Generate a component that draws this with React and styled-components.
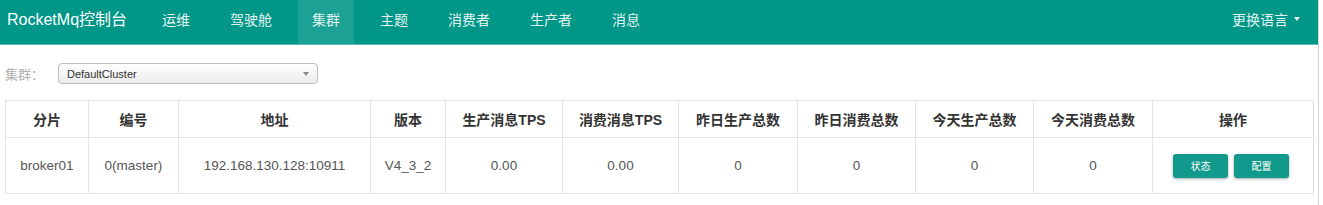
import styled, { createGlobalStyle } from 'styled-components'

const GlobalStyle = createGlobalStyle`
  body {
    margin: 0;
    background: #fff;
    font-family: "Liberation Sans", "Noto Sans CJK SC", sans-serif;
  }
`

const Page = styled.div`
  width: 1319px;
  height: 205px;
  border-right: 1px solid #d6d6d6;
  box-sizing: border-box;
`

const NavBar = styled.div`
  height: 45px;
  background: #009688;
  border-bottom: 1px solid #5fbdb3;
  box-sizing: border-box;
  display: flex;
  align-items: stretch;
  padding: 0 18px 0 7px;
`

const Brand = styled.div`
  color: #fff;
  font-size: 16px;
  display: flex;
  align-items: center;
  padding-bottom: 9px;
  margin-right: 21px;
`

const NavList = styled.div`
  display: flex;
  gap: 12px;
  flex: 1;
`

const NavItem = styled.div`
  padding: 0 14px 6px;
  display: flex;
  align-items: center;
  font-size: 14px;
  color: #e4f3f1;
  background: ${p => (p.$active ? '#1ba295' : 'transparent')};
`

const Lang = styled.div`
  display: flex;
  align-items: center;
  padding-bottom: 6px;
  color: #e4f3f1;
  font-size: 14px;
  gap: 6px;
`

const Caret = styled.span`
  width: 0;
  height: 0;
  border-left: 3px solid transparent;
  border-right: 3px solid transparent;
  border-top: 4px solid #e4f3f1;
`

const FilterRow = styled.div`
  display: flex;
  align-items: center;
  padding: 18px 0 0 5px;
  height: 21px;
`

const Label = styled.span`
  color: #b0b0b0;
  font-size: 13px;
  width: 53px;
`

const Select = styled.div`
  width: 260px;
  height: 21px;
  box-sizing: border-box;
  border: 1px solid #bdbdbd;
  border-radius: 4px;
  background: linear-gradient(#fff, #ececec);
  display: flex;
  align-items: center;
  justify-content: space-between;
  padding: 0 8px 0 8px;
  font-size: 11px;
  color: #333;
`

const SelectArrow = styled.span`
  width: 0;
  height: 0;
  border-left: 3px solid transparent;
  border-right: 3px solid transparent;
  border-top: 4px solid #888;
`

const Table = styled.table`
  margin: 16px 0 0 5px;
  border-collapse: collapse;
  table-layout: fixed;
  width: 1308px;
`

const Th = styled.th`
  height: 36px;
  border: 1px solid #e3e3e3;
  color: #333;
  font-size: 14px;
  font-weight: bold;
  text-align: center;
  padding: 0;
`

const Td = styled.td`
  height: 55px;
  border: 1px solid #e3e3e3;
  color: #555;
  font-size: 13.5px;
  text-align: center;
  padding: 0;
`

const Actions = styled.div`
  display: flex;
  justify-content: center;
  gap: 6px;
  padding-right: 4px;
`

const Btn = styled.button`
  width: 55px;
  height: 24px;
  border: none;
  border-radius: 3px;
  background: #11998c;
  color: #fff;
  font-size: 10px;
  font-family: inherit;
  box-shadow: 0 1px 3px rgba(0, 0, 0, 0.35);
`

const navItems = ['运维', '驾驶舱', '集群', '主题', '消费者', '生产者', '消息']

const columns = [
  ['分片', 83],
  ['编号', 90],
  ['地址', 192],
  ['版本', 75],
  ['生产消息TPS', 117],
  ['消费消息TPS', 116],
  ['昨日生产总数', 119],
  ['昨日消费总数', 118],
  ['今天生产总数', 118],
  ['今天消费总数', 119],
  ['操作', 161],
]

const row = ['broker01', '0(master)', '192.168.130.128:10911', 'V4_3_2', '0.00', '0.00', '0', '0', '0', '0']

export default function App() {
  return (
    <Page>
      <GlobalStyle />
      <NavBar>
        <Brand>RocketMq控制台</Brand>
        <NavList>
          {navItems.map(item => (
            <NavItem key={item} $active={item === '集群'}>{item}</NavItem>
          ))}
        </NavList>
        <Lang>
          更换语言 <Caret />
        </Lang>
      </NavBar>

      <FilterRow>
        <Label>集群：</Label>
        <Select>
          DefaultCluster
          <SelectArrow />
        </Select>
      </FilterRow>

      <Table>
        <colgroup>
          {columns.map(([name, w]) => (
            <col key={name} style={{ width: w }} />
          ))}
        </colgroup>
        <thead>
          <tr>
            {columns.map(([name]) => (
              <Th key={name}>{name}</Th>
            ))}
          </tr>
        </thead>
        <tbody>
          <tr>
            {row.map((v, i) => (
              <Td key={i}>{v}</Td>
            ))}
            <Td>
              <Actions>
                <Btn>状态</Btn>
                <Btn>配置</Btn>
              </Actions>
            </Td>
          </tr>
        </tbody>
      </Table>
    </Page>
  )
}
